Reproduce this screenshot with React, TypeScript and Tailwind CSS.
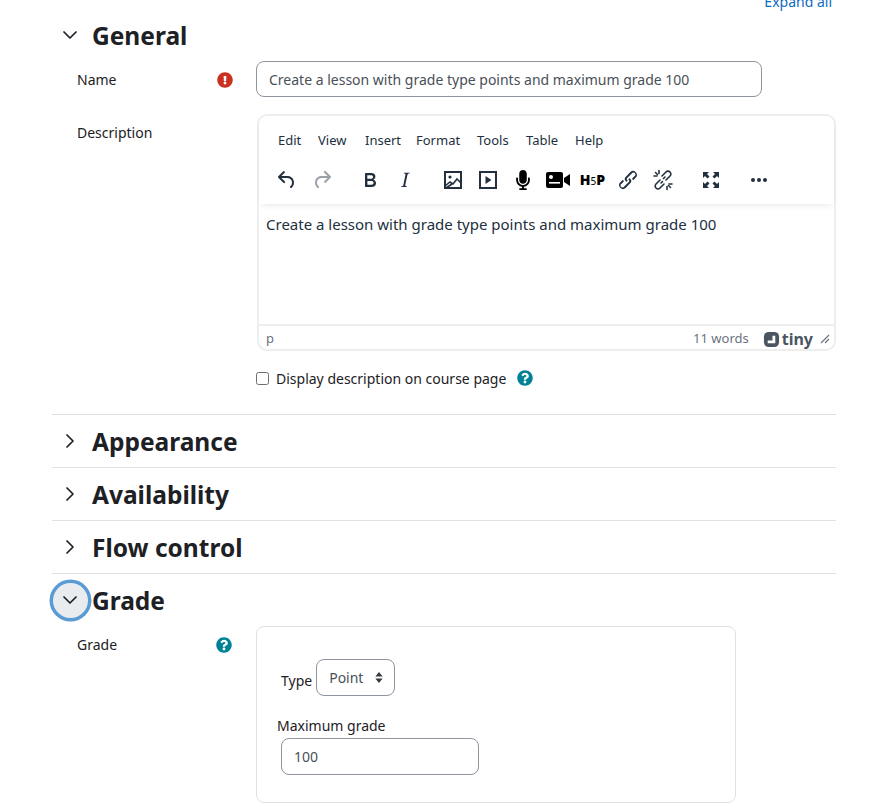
import { ChevronDown, ChevronRight } from 'lucide-react';
import { FaExclamationCircle, FaMicrophone, FaQuestionCircle } from 'react-icons/fa';

const FONT = "font-['Noto_Sans','Open_Sans',sans-serif]";

const MENU = [
  { label: 'Edit', w: 'w-[40px]' },
  { label: 'View', w: 'w-[47px]' },
  { label: 'Insert', w: 'w-[51px]' },
  { label: 'Format', w: 'w-[61px]' },
  { label: 'Tools', w: 'w-[49px]' },
  { label: 'Table', w: 'w-[49px]' },
  { label: 'Help', w: 'w-[45px]' },
];

function Glyph({ d, className = 'text-[#222f3e]' }: { d: string; className?: string }) {
  return (
    <svg viewBox="0 0 24 24" className={`size-6 fill-current ${className}`}>
      <path d={d} />
    </svg>
  );
}

const UNDO =
  'M6.4 8H12c3.7 0 6.2 2 6.8 5.1.6 2.7-.4 5.6-2.3 6.8a1 1 0 0 1-1-1.8c1.1-.6 1.8-2.7 1.4-4.6-.5-2.1-2.1-3.5-4.9-3.5H6.4l3.3 3.3a1 1 0 1 1-1.4 1.4l-5-5a1 1 0 0 1 0-1.4l5-5a1 1 0 0 1 1.4 1.4L6.4 8Z';
const REDO =
  'M17.6 10H12c-2.8 0-4.4 1.4-4.9 3.5-.4 2 .3 4 1.4 4.6a1 1 0 1 1-1 1.8c-2-1.2-2.9-4.1-2.3-6.8.6-3 3-5.1 6.8-5.1h5.6l-3.3-3.3a1 1 0 1 1 1.4-1.4l5 5a1 1 0 0 1 0 1.4l-5 5a1 1 0 0 1-1.4-1.4l3.3-3.3Z';
const BOLD =
  'M7.8 19c-.3 0-.5 0-.6-.2l-.2-.5V5.7c0-.2 0-.4.2-.5l.6-.2h5c1.5 0 2.7.3 3.5 1 .7.6 1.1 1.4 1.1 2.5a3 3 0 0 1-.6 1.9c-.4.6-1 1-1.6 1.2.4.1.9.3 1.3.6s.8.7 1 1.2c.4.4.5 1 .5 1.6 0 1.3-.4 2.3-1.3 3-.8.7-2.1 1-3.8 1H7.8Zm5-8.3c.6 0 1.2-.1 1.6-.5.4-.3.6-.7.6-1.3 0-1.1-.8-1.7-2.3-1.7H9.3v3.5h3.4Zm.5 6c.7 0 1.3-.1 1.7-.4.4-.4.6-.9.6-1.5s-.2-1-.7-1.4c-.4-.3-1-.4-2-.4H9.4v3.8h4Z';
const ITALIC =
  'M16.7 4.7l-.1.9h-.3c-.6 0-1 0-1.4.3-.3.3-.4.6-.5 1.1l-2.1 9.8v.6c0 .5.4.8 1.4.8h.2l-.2.8H8l.2-.8h.2c1.1 0 1.8-.5 2-1.5l2-9.8.1-.5c0-.6-.4-.8-1.4-.8h-.3l.2-.9h5.8Z';
const LINK =
  'M6.2 12.3a1 1 0 0 1 1.4 1.4l-2 2a2 2 0 1 0 2.6 2.8l4.8-4.8a1 1 0 0 0 0-1.4 1 1 0 1 1 1.4-1.3 2.9 2.9 0 0 1 0 4L9.6 20a3.9 3.9 0 0 1-5.5-5.5l2-2Zm11.6-.6a1 1 0 0 1-1.4-1.4l2-2a2 2 0 1 0-2.6-2.8L11 10.3a1 1 0 0 0 0 1.4A1 1 0 1 1 9.6 13a2.9 2.9 0 0 1 0-4L14.4 4a3.9 3.9 0 0 1 5.5 5.5l-2 2Z';

function ImageIcon() {
  return (
    <svg viewBox="0 0 24 24" className="size-6 fill-none stroke-[#222f3e]" strokeWidth="2">
      <rect x="4" y="4" width="16" height="16" />
      <circle cx="9" cy="9" r="1.6" className="fill-[#222f3e]" strokeWidth="0" />
      <path d="M4 18l5-4 3 2 4-5 4 4M5 20l6-4" strokeWidth="1.6" />
    </svg>
  );
}

function PlayIcon() {
  return (
    <svg viewBox="0 0 24 24" className="size-6 fill-none stroke-[#222f3e]" strokeWidth="2">
      <rect x="4" y="4" width="16" height="16" />
      <path d="M9.500 8l6 4-6 4z" className="fill-[#222f3e]" strokeWidth="0" />
    </svg>
  );
}

function VideoIcon() {
  return (
    <svg viewBox="0 0 24 16" className="h-[16px] w-[24px] fill-black">
      <rect x="0" y="0" width="17" height="16" rx="2" />
      <path d="M18 6l6-4v12l-6-4z" />
      <circle cx="5" cy="5" r="2" className="fill-white" />
      <rect x="3" y="10" width="11" height="1.600" className="fill-white" />
    </svg>
  );
}

function UnlinkIcon() {
  return (
    <svg viewBox="0 0 24 24" className="size-6 fill-none stroke-[#222f3e]" strokeWidth="1.6" strokeLinecap="round">
      <path d="M9 12l-4 4a2.800 2.800 0 0 0 4 4l4-4M11 8l4-4a2.800 2.800 0 0 1 4 4l-4 4M10 15l1.500-1.500M12.500 10.500L14 9" />
      <path d="M3 8h3M8 2.500v3M4.500 4.500L6.500 6.500M18 16h3M16 18.500v3M17.500 17.500L19.500 19.500" />
    </svg>
  );
}

function FullscreenIcon() {
  return (
    <svg viewBox="0 0 24 24" className="size-6 fill-[#222f3e]">
      <path d="M4 4h6L8 6l2.500 2.500-2 2L6 8l-2 2zM20 4v6l-2-2-2.500 2.500-2-2L16 6l-2-2zM4 20v-6l2 2 2.500-2.500 2 2L8 18l2 2zM20 20h-6l2-2-2.500-2.500 2-2L18 16l2-2z" />
    </svg>
  );
}

function MoreIcon() {
  return (
    <svg viewBox="0 0 24 24" className="size-6 fill-[#222f3e]">
      <circle cx="6" cy="12" r="2" />
      <circle cx="12" cy="12" r="2" />
      <circle cx="18" cy="12" r="2" />
    </svg>
  );
}

function Tool({ children }: { children: React.ReactNode }) {
  return <div className="flex h-[35px] w-[35px] shrink-0 items-center justify-center">{children}</div>;
}

function Editor() {
  return (
    <div className="flex h-[237px] w-[579px] flex-col rounded-[10px] border-2 border-[#eeeeee] bg-white">
      <div className="z-10 h-[88px] shadow-[0_4px_6px_-3px_rgba(34,47,62,0.12)]">
        <div className="flex h-[46px] items-start pt-[14px] pl-[19px] text-[13px] leading-[20px] text-[#222f3e]">
          {MENU.map((m) => (
            <span key={m.label} className={m.w}>
              {m.label}
            </span>
          ))}
        </div>
        <div className="flex pl-[10px]">
          <div className="mr-[13px] flex">
            <Tool><Glyph d={UNDO} /></Tool>
            <Tool><Glyph d={REDO} className="text-[#9ba1a8]" /></Tool>
          </div>
          <div className="mr-[13px] flex">
            <Tool><Glyph d={BOLD} /></Tool>
            <Tool><Glyph d={ITALIC} /></Tool>
          </div>
          <div className="mr-[13px] flex">
            <Tool><ImageIcon /></Tool>
            <Tool><PlayIcon /></Tool>
            <Tool><FaMicrophone className="size-[20px] text-black" /></Tool>
            <Tool><VideoIcon /></Tool>
            <Tool>
              <span className="text-[14px] font-black text-black">
                H<span className="text-[10px] font-normal">5</span>P
              </span>
            </Tool>
            <Tool><Glyph d={LINK} /></Tool>
            <Tool><UnlinkIcon /></Tool>
          </div>
          <div className="mr-[13px] flex">
            <Tool><FullscreenIcon /></Tool>
          </div>
          <Tool><MoreIcon /></Tool>
        </div>
      </div>
      <div className="flex-1 px-[7px] pt-[8px] text-[15px] leading-[24px] text-[#222f3e]">
        Create a lesson with grade type points and maximum grade 100
      </div>
      <div className="flex h-[25px] items-center border-t-2 border-[#eeeeee] pl-[7px] pr-[4px] pt-[3px] text-[13px] text-[#6b7380]">
        <span>p</span>
        <span className="ml-auto">11 words</span>
        <span className="ml-[14px] flex items-center text-[#4a5562]">
          <svg viewBox="0 0 18 18" className="size-[17px]">
            <rect x="1" y="1" width="16" height="16" rx="5" className="fill-[#4a5562]" />
            <path d="M10 5h3v8H5v-3h5z" className="fill-white" />
          </svg>
          <span className="ml-[2px] text-[16px] leading-none font-bold">tiny</span>
        </span>
        <svg viewBox="0 0 10 10" className="ml-[7px] size-[10px] stroke-[#6b7380]" strokeWidth="1.2">
          <path d="M1 9l8-8M5 9l4-4" />
        </svg>
      </div>
    </div>
  );
}

function Section({ title, open, focused }: { title: string; open?: boolean; focused?: boolean }) {
  return (
    <div className="flex h-[52px] items-center">
      <div className="flex w-[36px] shrink-0 justify-center">
        <div
          className={
            focused
              ? 'flex size-[35px] shrink-0 items-center justify-center rounded-full bg-[#e9ecef] ring-[3.500px] ring-[#5a9bd5]'
              : 'flex size-[35px] shrink-0 items-center justify-center'
          }
        >
          {open ? (
            <ChevronDown className="size-[24px] text-[#1d2125]" strokeWidth={1.75} />
          ) : (
            <ChevronRight className="size-[24px] text-[#1d2125]" strokeWidth={1.75} />
          )}
        </div>
      </div>
      <h3 className="ml-[4px] mt-[2px] text-[24.500px] leading-none font-bold text-[#1d2125]">{title}</h3>
    </div>
  );
}

function Label({ text, children }: { text: string; children?: React.ReactNode }) {
  return (
    <div className="flex w-[204px] shrink-0 justify-between pl-[25px] pr-[23px] text-[14px] leading-[22px] text-[#1d2125]">
      <span>{text}</span>
      {children}
    </div>
  );
}

export default function App() {
  return (
    <div className={`h-[811px] w-[895px] overflow-hidden bg-white ${FONT}`}>
      <div className="ml-[52px] w-[784px]">
        <div className="-mt-[9px] h-[18px] pr-[4px] text-right text-[14px] leading-[22px] text-[#0f6cbf]">
          Expand all
        </div>
        <Section title="General" open />
        <div className="flex">
          <div className="pt-[8px]">
            <Label text="Name">
              <FaExclamationCircle className="mt-[3px] size-[16px] text-[#ca3120]" />
            </Label>
          </div>
          <div className="flex h-[36px] w-[506px] items-center rounded-[8px] border border-[#8f959e] px-[12px] text-[14px] text-[#495057]">
            Create a lesson with grade type points and maximum grade 100
          </div>
        </div>
        <div className="mt-[17px] flex">
          <div className="pt-[8px]">
            <Label text="Description" />
          </div>
          <div className="ml-[1px]">
            <Editor />
          </div>
        </div>
        <div className="mt-[15px] flex h-[24px] items-center pl-[205px] text-[14px] text-[#1d2125]">
          <span className="-ml-[1px] size-[13px] rounded-[2.500px] border border-[#6b6f73]" />
          <span className="ml-[7px]">Display description on course page</span>
          <FaQuestionCircle className="ml-[11px] size-[16px] text-[#008196]" />
        </div>
        <div className="mt-[24px] border-t border-[#dee2e6]">
          <Section title="Appearance" />
        </div>
        <div className="border-t border-[#dee2e6]">
          <Section title="Availability" />
        </div>
        <div className="border-t border-[#dee2e6]">
          <Section title="Flow control" />
        </div>
        <div className="border-t border-[#dee2e6]">
          <Section title="Grade" open focused />
        </div>
        <div className="flex">
          <div className="pt-[8px]">
            <Label text="Grade">
              <FaQuestionCircle className="mr-[1px] mt-[3px] size-[16px] text-[#008196]" />
            </Label>
          </div>
          <div className="h-[177px] w-[480px] rounded-[8px] border border-[#dee2e6] pl-[24px] pt-[32px]">
            <div className="flex items-end text-[14px] text-[#1d2125]">
              <span className="mr-[4px] leading-[30px]">Type</span>
              <div className="flex h-[37px] w-[79px] items-center justify-between rounded-[8px] border border-[#8f959e] pl-[12px] pr-[11px] text-[#495057]">
                <span className="-mt-[1px]">Point</span>
                <svg viewBox="0 0 8 12" className="h-[11px] w-[8px] fill-[#343a40]">
                  <path d="M4 0l4 5H0zM4 12l4-5H0z" />
                </svg>
              </div>
            </div>
            <div className="-ml-[4px] mt-[19px] text-[14px] leading-[22px] text-[#1d2125]">Maximum grade</div>
            <div className="mt-[1px] flex h-[37px] w-[198px] items-center rounded-[8px] border border-[#8f959e] px-[12px] text-[14px] text-[#495057]">
              100
            </div>
          </div>
        </div>
      </div>
    </div>
  );
}
